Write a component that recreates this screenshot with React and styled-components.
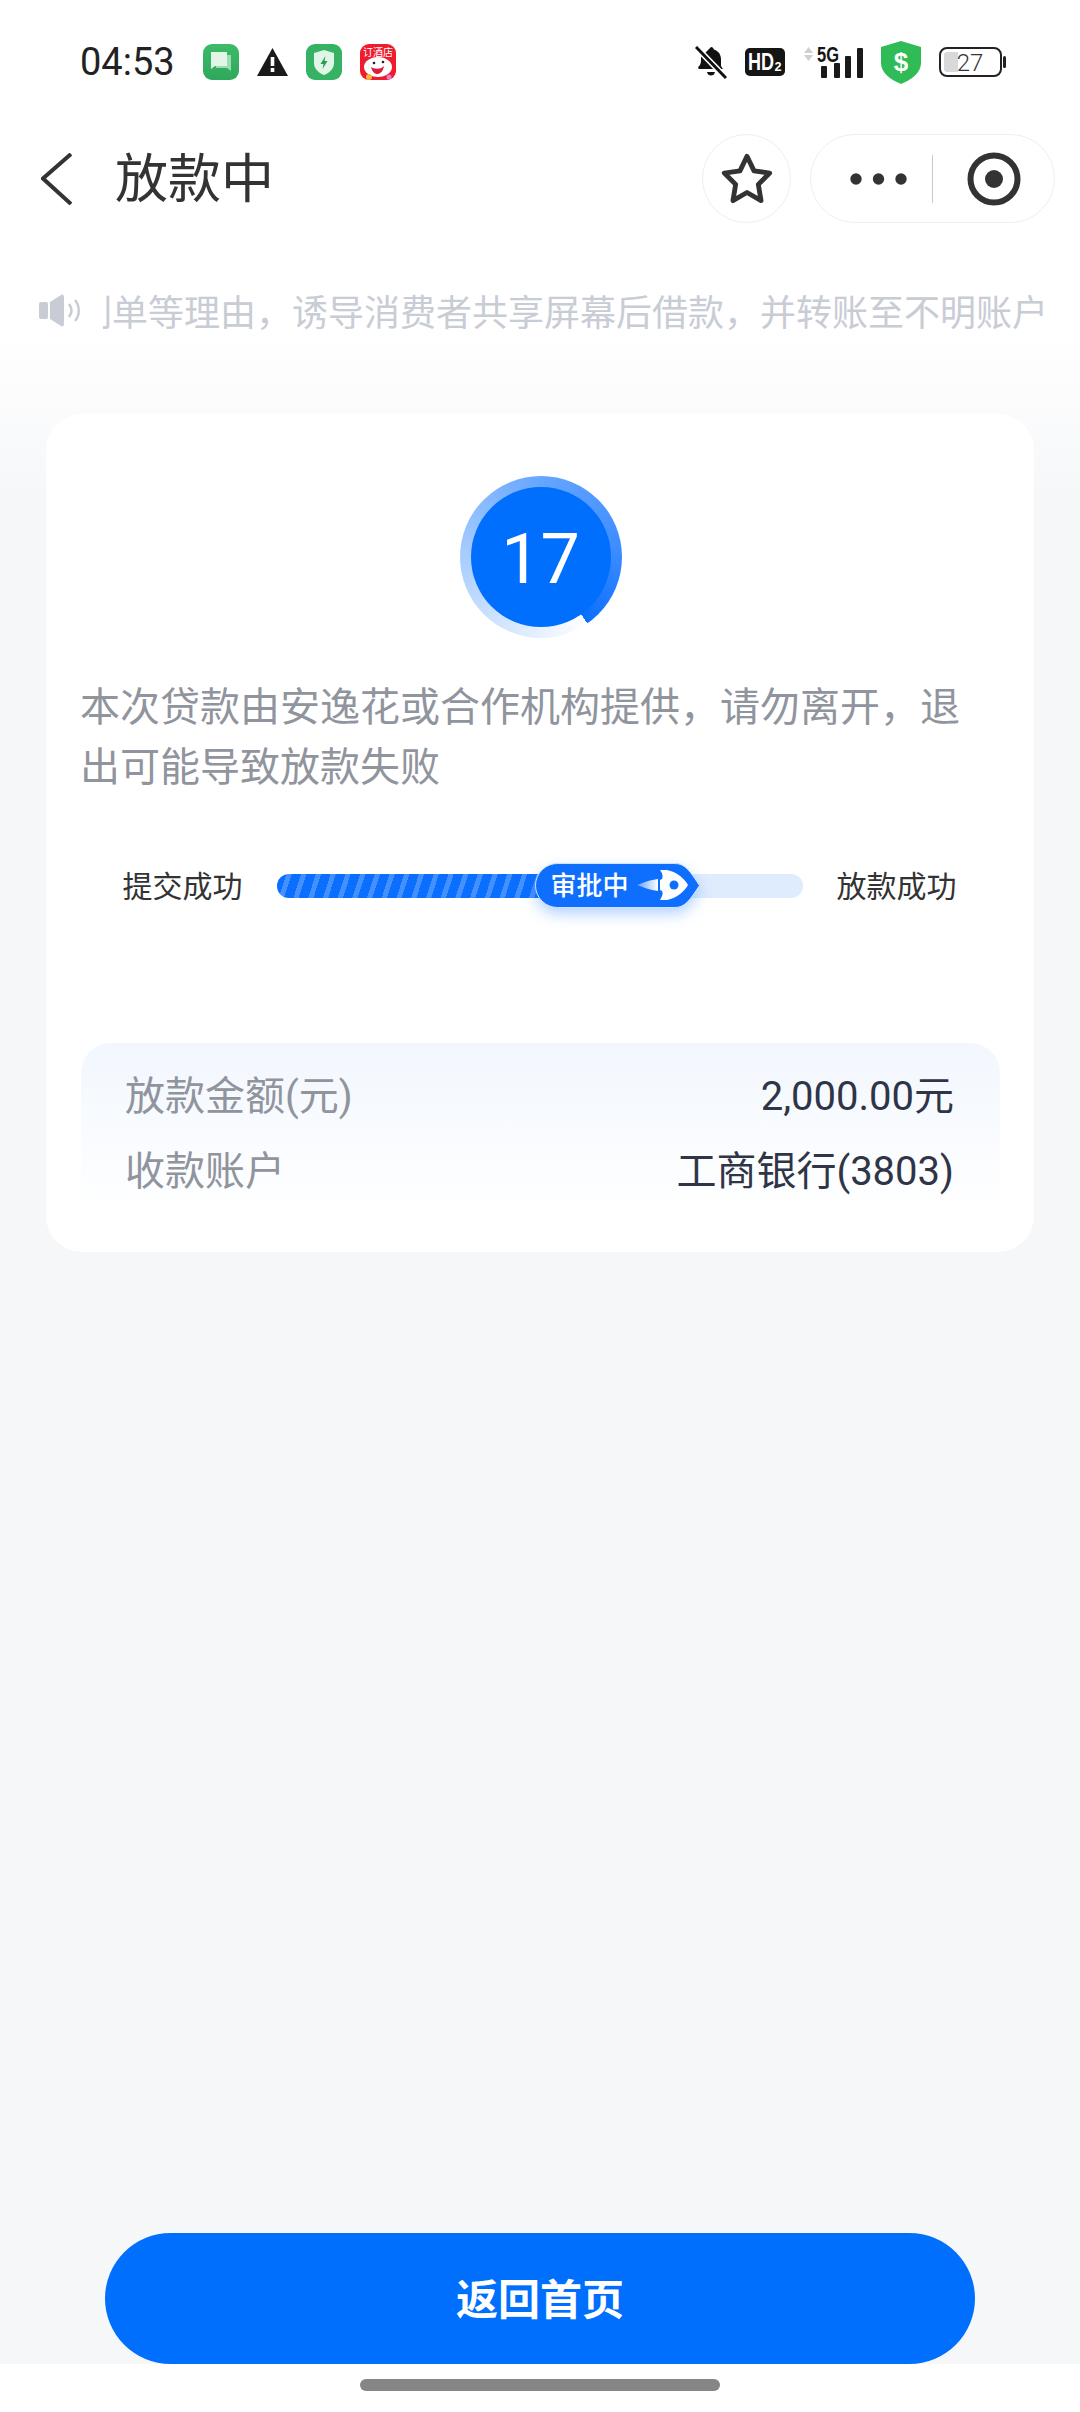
import React from 'react';
import styled, { createGlobalStyle } from 'styled-components';

const GlobalStyle = createGlobalStyle`
  html, body {
    margin: 0;
    padding: 0;
    background: #fff;
  }
  * {
    box-sizing: border-box;
  }
`;

const Page = styled.div`
  width: 1080px;
  height: 2412px;
  overflow: hidden;
  display: flex;
  flex-direction: column;
  font-family: "Noto Sans CJK SC", "Noto Sans", sans-serif;
  background: linear-gradient(#fff 0, #fff 330px, #f6f7f9 500px);
`;

const StatusBar = styled.div`
  height: 84px;
  padding: 40px 74px 0 80px;
  display: flex;
  align-items: center;
`;

const Time = styled.div`
  font-family: Roboto, sans-serif;
  font-size: 38px;
  line-height: 44px;
  color: #222;
  width: 92px;
  margin-right: 31px;
`;

const StatusLeft = styled.div`
  display: flex;
  align-items: center;
  gap: 18px;
`;

const StatusRight = styled.div`
  margin-left: auto;
  display: flex;
  align-items: center;
  gap: 18px;
`;

const StatusSvg = styled.svg`
  overflow: visible;
`;

const NavBar = styled.div`
  margin-top: 50px;
  height: 89px;
  padding: 0 25px 0 41px;
  display: flex;
  align-items: center;
`;

const Title = styled.h1`
  margin: 0 0 6px 43px;
  font-size: 53px;
  line-height: 83px;
  font-weight: 400;
  color: #333;
`;

const NavActions = styled.div`
  margin-left: auto;
  display: flex;
  gap: 19px;
`;

const RoundButton = styled.div`
  width: 89px;
  height: 89px;
  border: 1px solid #eeeeee;
  border-radius: 50%;
  display: flex;
  align-items: center;
  justify-content: center;
`;

const Capsule = styled.div`
  width: 245px;
  height: 89px;
  border: 1px solid #eeeeee;
  border-radius: 45px;
  padding-left: 39px;
  display: flex;
  align-items: center;
`;

const CapsuleDivider = styled.div`
  width: 1px;
  height: 48px;
  margin: 0 33px 0 25px;
  background: #c9c9c9;
`;

const Notice = styled.div`
  margin-top: 60px;
  height: 54px;
  padding-left: 39px;
  display: flex;
  align-items: center;
`;

const NoticeWindow = styled.div`
  margin-left: 22px;
  flex: 1;
  overflow: hidden;
`;

const NoticeText = styled.div`
  font-size: 36px;
  line-height: 54px;
  color: #c8ccd4;
  white-space: nowrap;
  transform: translateX(-27px);
`;

const Card = styled.div`
  margin: 77px 46px 0;
  height: 838px;
  padding: 62px 34px 0 35px;
  background: #fff;
  border-radius: 36px;
`;

const Countdown = styled.div`
  position: relative;
  width: 162px;
  height: 162px;
  margin: 0 auto;
  border-radius: 50%;
  background: conic-gradient(
    from 145deg,
    #ffffff 0deg,
    #e3effe 40deg,
    #a9cdff 125deg,
    #66a6ff 215deg,
    #3d8cff 300deg,
    #0a6fff 360deg
  );
  display: flex;
  align-items: center;
  justify-content: center;
`;

const CountdownInner = styled.div`
  width: 140px;
  height: 140px;
  padding-top: 4px;
  border-radius: 50%;
  background: #006ffd;
  color: #fff;
  font-family: Roboto, sans-serif;
  font-size: 70px;
  font-weight: 400;
  display: flex;
  align-items: center;
  justify-content: center;
`;

const Message = styled.p`
  margin: 36px 10px 0 -1px;
  font-size: 40px;
  line-height: 60px;
  color: #90949d;
`;

const ProgressRow = styled.div`
  margin: 69px 2px 0 0;
  height: 45px;
  display: flex;
  align-items: center;
  justify-content: center;
  gap: 34px;
`;

const StepLabel = styled.div`
  width: 120px;
  margin-bottom: 3px;
  font-size: 30px;
  line-height: 42px;
  color: #333;
  white-space: nowrap;
`;

const Track = styled.div`
  position: relative;
  width: 526px;
  height: 24px;
  border-radius: 12px;
  background: #dfecfd;
`;

const TrackFill = styled.div`
  width: 283px;
  height: 100%;
  border-radius: 12px;
  background: repeating-linear-gradient(108deg, #0a6fff 0 9px, #4490ff 9px 14px);
`;

const StatusPill = styled.div`
  position: absolute;
  left: 258px;
  top: -11px;
  width: 165px;
  height: 45px;
  padding: 0 0 0 16px;
  display: flex;
  align-items: center;
  gap: 8px;
  color: #fff;
  font-size: 26px;
  font-weight: 500;
  white-space: nowrap;

  span {
    position: relative;
    line-height: 41px;
    margin-bottom: 4px;
  }
`;

const PillShape = styled.svg`
  position: absolute;
  left: 0;
  top: 0;
  overflow: visible;
  filter: drop-shadow(0 6px 7px rgba(10, 111, 255, 0.3));
`;

const InfoPanel = styled.div`
  margin-top: 135px;
  padding: 15px 46px 7px 44px;
  border-radius: 30px 30px 0 0;
  background: linear-gradient(#f2f7fe, #ffffff);
`;

const InfoRow = styled.div`
  height: 75px;
  padding-bottom: 6px;
  display: flex;
  align-items: center;
  justify-content: space-between;
  font-family: Roboto, "Noto Sans CJK SC", sans-serif;
  font-size: 40px;
`;

const InfoLabel = styled.span`
  color: #90949d;
`;

const InfoValue = styled.span`
  color: #2f3546;
`;

const HomeButton = styled.button`
  margin: auto 105px 0;
  height: 131px;
  flex-shrink: 0;
  padding: 0 0 5px;
  border: none;
  border-radius: 66px;
  background: #006ffd;
  color: #fff;
  font-family: inherit;
  font-size: 42px;
  font-weight: 700;
`;

const HomeStrip = styled.div`
  height: 48px;
  flex-shrink: 0;
  padding-top: 15px;
  background: #fff;
  display: flex;
  justify-content: center;
`;

const HomeBar = styled.div`
  width: 360px;
  height: 12px;
  border-radius: 6px;
  background: #868686;
`;

const ChatIcon = () => (
  <svg width="36" height="36" viewBox="0 0 36 36">
    <defs>
      <linearGradient id="chatBg" x1="0" y1="0" x2="0" y2="1">
        <stop offset="0" stopColor="#3dbb69" />
        <stop offset="1" stopColor="#2ea85a" />
      </linearGradient>
    </defs>
    <rect width="36" height="36" rx="9" fill="url(#chatBg)" />
    <path d="M13 11h15v16l-4-3H13z" fill="#9ddcb2" />
    <path d="M8 8h16v14H12l-4 3z" fill="#e2f6e8" />
  </svg>
);

const WarningIcon = () => (
  <svg width="31" height="28" viewBox="0 0 31 28">
    <path d="M15.5 0 31 28H0z" fill="#1a1a1a" />
    <rect x="13.7" y="9" width="3.6" height="9" fill="#fff" />
    <rect x="13.7" y="20" width="3.6" height="4" fill="#fff" />
  </svg>
);

const GuardIcon = () => (
  <svg width="36" height="36" viewBox="0 0 36 36">
    <rect width="36" height="36" rx="9" fill="#35b263" />
    <path d="M18 6l10 3v10c0 6-5 10-10 12-5-2-10-6-10-12V9z" fill="#dff5e6" />
    <path d="M19.5 12l-5 8h3l-1 5 5-8h-3z" fill="#2a9a55" />
  </svg>
);

const HotelIcon = () => (
  <svg width="36" height="36" viewBox="0 0 36 36">
    <rect width="36" height="36" rx="9" fill="#ef1c2e" />
    <text x="18" y="12" textAnchor="middle" fontSize="10" fill="#fff" fontFamily="Noto Sans CJK SC, sans-serif">订酒店</text>
    <ellipse cx="18" cy="23" rx="14" ry="10" fill="#fff" />
    <path d="M11 23c3 2 9 3 13-1-1 6-4 8-7 8s-5-3-6-7z" fill="#d8203a" />
    <circle cx="14" cy="19" r="1.3" fill="#222" />
    <circle cx="23" cy="18" r="1.3" fill="#222" />
    <circle cx="9" cy="33" r="3" fill="#f6b73c" />
    <circle cx="29" cy="33" r="2.5" fill="#e87ad0" />
  </svg>
);

const MutedBellIcon = () => (
  <svg width="32" height="33" viewBox="0 0 32 33">
    <path d="M16 1c1.600 0 2.600 1 2.800 2.400C23.400 4.600 26 8.600 26 13v7l2 3H7.500l-3 0c-1.400-.2-1.800-1.600-.8-2.600C5.400 19 6 17 6 14V11z" fill="#111" />
    <path d="M12 26h8c-.5 2.500-2 3.500-4 3.500S12.500 28.500 12 26z" fill="#111" />
    <path d="M1 1l30 31" stroke="#fff" strokeWidth="6" />
    <path d="M1 1l30 31" stroke="#111" strokeWidth="3" />
  </svg>
);

const HdIcon = () => (
  <StatusSvg width="40" height="28" viewBox="0 0 40 28">
    <rect width="40" height="28" rx="5" fill="#151515" />
    <text x="3" y="22" fontSize="24" fontWeight="700" fill="#fff" fontFamily="Liberation Sans, DejaVu Sans, sans-serif" textLength="34" lengthAdjust="spacingAndGlyphs">HD₂</text>
  </StatusSvg>
);

const SignalIcon = () => (
  <StatusSvg width="60" height="33" viewBox="0 0 60 33">
    <path d="M1 7l4.500-6L10 7zM1 9l4.500 6L10 9z" fill="#d0d0d0" />
    <text x="14" y="16" fontSize="22" fontWeight="700" fill="#151515" fontFamily="Liberation Sans, sans-serif" textLength="22" lengthAdjust="spacingAndGlyphs">5G</text>
    <rect x="18" y="20" width="6" height="12" rx="1" fill="#1a1a1a" />
    <rect x="31" y="17" width="6" height="15" rx="1" fill="#1a1a1a" />
    <rect x="42" y="10" width="6" height="22" rx="1" fill="#1a1a1a" />
    <rect x="54" y="2" width="6" height="30" rx="1" fill="#1a1a1a" />
  </StatusSvg>
);

const MoneyShieldIcon = () => (
  <svg width="40" height="43" viewBox="0 0 40 43">
    <path d="M20 0l20 6v16c0 10-10 17-20 21C10 39 0 32 0 22V6z" fill="#2fbb55" />
    <text x="20" y="30" textAnchor="middle" fontSize="26" fontWeight="700" fill="#fff" fontFamily="Liberation Sans, sans-serif">$</text>
  </svg>
);

const BatteryIcon = () => (
  <svg width="67" height="30" viewBox="0 0 67 30">
    <rect x="1" y="1" width="61" height="28" rx="7" fill="#fff" stroke="#222" strokeWidth="2" />
    <path d="M5 8a3 3 0 0 1 3-3h11v20H8a3 3 0 0 1-3-3z" fill="#d9d9d9" />
    <rect x="64" y="9" width="3" height="12" rx="1.500" fill="#222" />
    <text x="31" y="24" textAnchor="middle" fontSize="24" fontWeight="300" fill="#333" fontFamily="Roboto, sans-serif">27</text>
  </svg>
);

const BackIcon = () => (
  <svg width="31" height="52" viewBox="0 0 31 52">
    <path d="M30 1 2 25.500 30 51" fill="none" stroke="#333" strokeWidth="4" />
  </svg>
);

const StarIcon = () => (
  <svg width="54" height="54" viewBox="0 0 50 50">
    <path
      d="M25 4l6.500 13.500L46 19.500 35.500 30l2.500 15-13-7.500L12 45l2.500-15L4 19.500l14.500-2z"
      fill="none"
      stroke="#333"
      strokeWidth="4.500"
      strokeLinejoin="round"
    />
  </svg>
);

const DotsIcon = () => (
  <svg width="57" height="12" viewBox="0 0 57 12">
    <circle cx="6" cy="6" r="5.700" fill="#333" />
    <circle cx="28.500" cy="6" r="5.700" fill="#333" />
    <circle cx="51" cy="6" r="5.700" fill="#333" />
  </svg>
);

const RecordIcon = () => (
  <svg width="56" height="56" viewBox="0 0 56 56">
    <circle cx="28" cy="28" r="23.500" fill="none" stroke="#333" strokeWidth="6" />
    <circle cx="28" cy="28" r="9" fill="#333" />
  </svg>
);

const SpeakerIcon = () => (
  <svg width="42" height="33" viewBox="0 0 42 33">
    <rect x="0" y="8" width="9" height="17" rx="2" fill="#c8ccd4" />
    <path d="M11 8 22 1c1.500-1 3 0 3 2v27c0 2-1.500 3-3 2L11 25z" fill="#c8ccd4" />
    <path d="M30 10c3 4 3 9 0 13" fill="none" stroke="#c8ccd4" strokeWidth="2.500" />
    <path d="M36 6c5 6 5 15 0 21" fill="none" stroke="#c8ccd4" strokeWidth="2.500" />
  </svg>
);

const RocketIcon = () => (
  <svg width="52" height="30" viewBox="0 0 52 30" style={{ position: 'relative', flexShrink: 0 }}>
    <defs>
      <linearGradient id="flame" x1="0" y1="0" x2="1" y2="0">
        <stop offset="0" stopColor="#fff" stopOpacity="0.35" />
        <stop offset="1" stopColor="#fff" />
      </linearGradient>
    </defs>
    <path d="M0 15c8-3 13-5 21-6v12c-8-1-13-3-21-6z" fill="url(#flame)" />
    <path
      d="M23 0h7c10 2 18 9 21 15-3 6-11 13-21 15h-7c3-5 3-7 2-9l-2-1V10l2-1c1-2 1-5-2-9z"
      fill="#fff"
    />
    <circle cx="37" cy="15" r="4.500" fill="#0e6fff" />
  </svg>
);

const App = () => (
  <Page>
    <GlobalStyle />
    <StatusBar>
      <Time>04:53</Time>
      <StatusLeft>
        <ChatIcon />
        <WarningIcon />
        <GuardIcon />
        <HotelIcon />
      </StatusLeft>
      <StatusRight>
        <MutedBellIcon />
        <HdIcon />
        <SignalIcon />
        <MoneyShieldIcon />
        <BatteryIcon />
      </StatusRight>
    </StatusBar>

    <NavBar>
      <BackIcon />
      <Title>放款中</Title>
      <NavActions>
        <RoundButton>
          <StarIcon />
        </RoundButton>
        <Capsule>
          <DotsIcon />
          <CapsuleDivider />
          <RecordIcon />
        </Capsule>
      </NavActions>
    </NavBar>

    <Notice>
      <SpeakerIcon />
      <NoticeWindow>
        <NoticeText>刷单等理由，诱导消费者共享屏幕后借款，并转账至不明账户</NoticeText>
      </NoticeWindow>
    </Notice>

    <Card>
      <Countdown>
        <CountdownInner>17</CountdownInner>
      </Countdown>
      <Message>本次贷款由安逸花或合作机构提供，请勿离开，退出可能导致放款失败</Message>

      <ProgressRow>
        <StepLabel>提交成功</StepLabel>
        <Track>
          <TrackFill />
          <StatusPill>
            <PillShape width="165" height="45" viewBox="0 0 165 45">
              <path
                d="M22.500.5H140C150 .5 155 8 164.500 22.500 155 37 150 44.500 140 44.500H22.500a22 22 0 0 1 0-44z"
                fill="#0e6fff"
                stroke="#cfe2ff"
              />
            </PillShape>
            <span>审批中</span>
            <RocketIcon />
          </StatusPill>
        </Track>
        <StepLabel>放款成功</StepLabel>
      </ProgressRow>

      <InfoPanel>
        <InfoRow>
          <InfoLabel>放款金额(元)</InfoLabel>
          <InfoValue>2,000.00元</InfoValue>
        </InfoRow>
        <InfoRow>
          <InfoLabel>收款账户</InfoLabel>
          <InfoValue>工商银行(3803)</InfoValue>
        </InfoRow>
      </InfoPanel>
    </Card>

    <HomeButton>返回首页</HomeButton>
    <HomeStrip>
      <HomeBar />
    </HomeStrip>
  </Page>
);

export default App;
